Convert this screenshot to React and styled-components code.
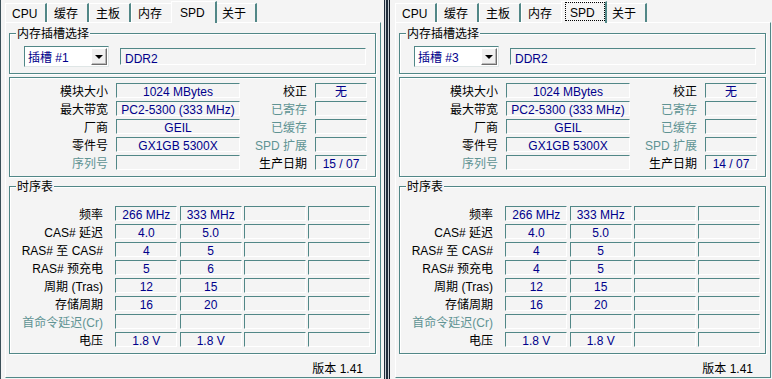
import React from "react";
import styled, { createGlobalStyle } from "styled-components";

const BG = "#f4f4f4";
const TEAL = "#518787";
const BLUE = "#00008b";
const DIM = "#5f9393";

const Global = createGlobalStyle`
  html, body { margin: 0; padding: 0; background: ${BG}; }
  body {
    font-family: "Liberation Sans", "Noto Sans CJK SC", sans-serif;
    font-size: 12px;
    color: #000;
  }
  * { box-sizing: border-box; }
`;

const Screen = styled.div`
  display: flex;
  width: 772px;
  height: 379px;
  overflow: hidden;
  background: ${BG};
`;

const Window = styled.div`
  flex: none;
  width: 382px;
  height: 379px;
  display: flex;
  flex-direction: column;
  padding-right: 1px;
  padding-left: ${(p) => (p.$framed ? 4 : 5)}px;
  border-left: ${(p) => (p.$framed ? "1px solid #3b4f58" : "none")};
`;

const Divider = styled.div`
  flex: none;
  width: 8px;
  height: 379px;
  background: linear-gradient(
    to right,
    ${BG} 0 2px,
    #1f2b3a 2px 3px,
    #c9cfd4 3px 4px,
    #1f2b3a 4px 6px,
    #c9cfd4 6px 7px,
    #141c28 7px 8px
  );
`;

const TabBar = styled.div`
  flex: none;
  height: 22px;
  display: flex;
  align-items: flex-end;
`;

const Tab = styled.div`
  position: relative;
  z-index: ${(p) => (p.$active ? 1 : 0)};
  flex: none;
  width: ${(p) => (p.$active ? p.$w + 4 : p.$w)}px;
  height: ${(p) => (p.$active ? 22 : 19)}px;
  margin: ${(p) => (p.$active ? "0 -2px -1px -2px" : "0")};
  background: ${BG};
  border-top: 1px solid #fff;
  border-left: 1px solid #fff;
  border-right: 2px solid ${TEAL};
`;

const TabLabel = styled.span`
  display: block;
  height: ${(p) => (p.$active ? 19 : 17)}px;
  margin-left: ${(p) => (p.$active ? 3 : 1)}px;
  border: 1px dotted ${(p) => (p.$focus ? "#000" : "transparent")};
  padding: ${(p) => (p.$active ? 3 : 2)}px 0 0 4px;
  line-height: 14px;
  white-space: nowrap;
`;

const Panel = styled.div`
  flex: none;
  height: 356px;
  display: flex;
  flex-direction: column;
  border: 1px solid;
  border-color: #fff ${TEAL} ${TEAL} #fff;
  padding: 0 4px 0 3px;
  background: ${BG};
`;

const Group = styled.div`
  position: relative;
  flex: none;
  margin-top: ${(p) => p.$mt}px;
  height: ${(p) => p.$h}px;
  padding-top: ${(p) => p.$pt}px;
  border: 1px solid ${TEAL};
  box-shadow: inset 1px 1px 0 #fff, 1px 1px 0 #fff;
`;

const Legend = styled.span`
  position: absolute;
  top: -6px;
  left: 6px;
  padding: 0 1px;
  background: ${BG};
  line-height: 13px;
  white-space: nowrap;
`;

const SlotRow = styled.div`
  display: flex;
  align-items: center;
  gap: 11px;
  padding: 0 9px 0 14px;
`;

const Combo = styled.div`
  flex: none;
  display: flex;
  width: 85px;
  height: 21px;
  padding: 1px;
  background: #fff;
  border: 1px solid;
  border-color: ${TEAL} #dfe6e6 #dfe6e6 ${TEAL};
`;

const ComboText = styled.div`
  flex: 1;
  padding: 3px 0 0 2px;
  line-height: 14px;
  color: ${BLUE};
  white-space: nowrap;
`;

const ComboButton = styled.div`
  flex: none;
  width: 16px;
  height: 17px;
  display: flex;
  align-items: center;
  justify-content: center;
  background: #f0f0f0;
  border: 1px solid;
  border-color: #fff #6d6d6d #6d6d6d #fff;
  box-shadow: inset -1px -1px 0 #b8b8b8;
`;

const Arrow = styled.span`
  width: 0;
  height: 0;
  margin-top: 1px;
  border-left: 4px solid transparent;
  border-right: 4px solid transparent;
  border-top: 4px solid #000;
`;

const Field = styled.div`
  height: ${(p) => p.$h || 15}px;
  border: 1px solid;
  border-color: ${TEAL} #fff #fff ${TEAL};
  padding-top: ${(p) => p.$pt || 2}px;
  padding-left: ${(p) => (p.$left ? 4 : 0)}px;
  line-height: 13px;
  color: ${BLUE};
  text-align: ${(p) => (p.$left ? "left" : "center")};
  white-space: nowrap;
`;

const WideField = styled(Field)`
  flex: 1;
  line-height: 14px;
`;

const Label = styled.div`
  padding-top: 3px;
  padding-right: ${(p) => p.$pr}px;
  line-height: 13px;
  text-align: right;
  white-space: nowrap;
  color: ${(p) => (p.$dim ? DIM : "#000")};
`;

const InfoGrid = styled.div`
  display: grid;
  grid-template-columns: 106px 124px 75px 52px;
  grid-auto-rows: 15px;
  row-gap: 3px;
`;

const TimingGrid = styled.div`
  display: grid;
  grid-template-columns: 103px repeat(4, 62px);
  grid-auto-rows: 15px;
  row-gap: 3px;
  column-gap: 2.33px;
`;

const Footer = styled.div`
  flex: 1;
  display: flex;
  justify-content: flex-end;
  align-items: flex-end;
  padding: 0 13px 1px 0;
  line-height: 14px;
  white-space: nowrap;
`;

const TABS = [
  ["CPU", 42],
  ["缓存", 42],
  ["主板", 42],
  ["内存", 42],
  ["SPD", 42],
  ["关于", 42],
];

function CpuzWindow({ slot, date, ras, focus, framed }) {
  const left = [
    ["模块大小", "1024 MBytes"],
    ["最大带宽", "PC2-5300 (333 MHz)"],
    ["厂商", "GEIL"],
    ["零件号", "GX1GB 5300X"],
    ["序列号", "", true],
  ];
  const right = [
    ["校正", "无"],
    ["已寄存", "", true],
    ["已缓存", "", true],
    ["SPD 扩展", "", true],
    ["生产日期", date],
  ];
  const timing = [
    ["频率", "266 MHz", "333 MHz"],
    ["CAS# 延迟", "4.0", "5.0"],
    ["RAS# 至 CAS#", "4", "5"],
    ["RAS# 预充电", ras[0], ras[1]],
    ["周期 (Tras)", "12", "15"],
    ["存储周期", "16", "20"],
    ["首命令延迟(Cr)", "", "", true],
    ["电压", "1.8 V", "1.8 V"],
  ];
  return (
    <Window $framed={framed}>
      <TabBar>
        {TABS.map(([t, w]) => {
          const active = t === "SPD";
          return (
            <Tab key={t} $w={w} $active={active}>
              <TabLabel $active={active} $focus={active && focus}>
                {t}
              </TabLabel>
            </Tab>
          );
        })}
      </TabBar>
      <Panel>
        <Group $mt={10} $h={41} $pt={12}>
          <Legend>内存插槽选择</Legend>
          <SlotRow>
            <Combo>
              <ComboText>{slot}</ComboText>
              <ComboButton>
                <Arrow />
              </ComboButton>
            </Combo>
            <WideField $h={17} $pt={3} $left>
              DDR2
            </WideField>
          </SlotRow>
        </Group>
        <Group $mt={3} $h={100} $pt={5}>
          <InfoGrid>
            {left.map((l, i) => (
              <React.Fragment key={l[0]}>
                <Label $pr={8} $dim={l[2]}>
                  {l[0]}
                </Label>
                <Field>{l[1]}</Field>
                <Label $pr={8} $dim={right[i][2]}>
                  {right[i][0]}
                </Label>
                <Field>{right[i][1]}</Field>
              </React.Fragment>
            ))}
          </InfoGrid>
        </Group>
        <Group $mt={9} $h={168} $pt={19}>
          <Legend>时序表</Legend>
          <TimingGrid>
            {timing.map((r) => (
              <React.Fragment key={r[0]}>
                <Label $pr={10} $dim={r[3]}>
                  {r[0]}
                </Label>
                <Field>{r[1]}</Field>
                <Field>{r[2]}</Field>
                <Field />
                <Field />
              </React.Fragment>
            ))}
          </TimingGrid>
        </Group>
        <Footer>版本 1.41</Footer>
      </Panel>
    </Window>
  );
}

export default function App() {
  return (
    <>
      <Global />
      <Screen>
        <CpuzWindow slot="插槽 #1" date="15 / 07" ras={["5", "6"]} framed />
        <Divider />
        <CpuzWindow slot="插槽 #3" date="14 / 07" ras={["4", "5"]} focus />
      </Screen>
    </>
  );
}
